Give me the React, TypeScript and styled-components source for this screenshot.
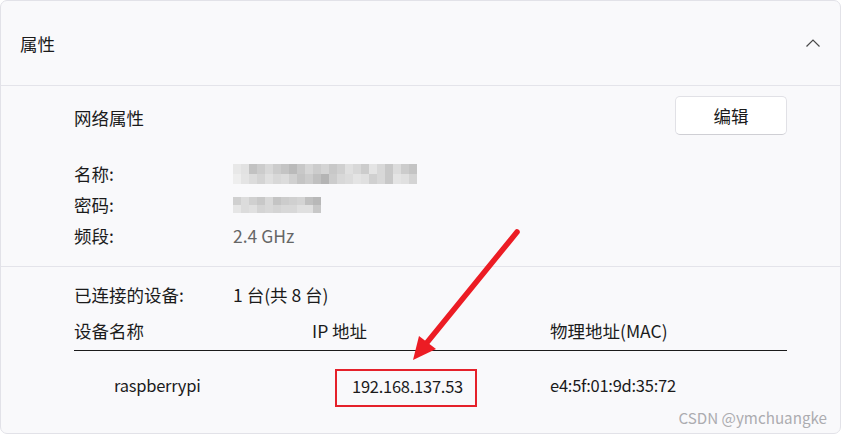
import React from "react";
import styled, { createGlobalStyle } from "styled-components";

const GlobalStyle = createGlobalStyle`
  html, body {
    margin: 0;
    padding: 0;
    background: #ffffff;
  }
  body {
    font-family: "Noto Sans CJK SC", "Noto Sans", sans-serif;
    color: #1b1b1b;
  }
`;

const Card = styled.div`
  position: relative;
  box-sizing: border-box;
  width: 841px;
  height: 434px;
  border: 1px solid #e2e2e8;
  border-radius: 7px;
  background: #f9f9fb;
  overflow: hidden;
  font-size: 17.5px;
`;

const Header = styled.div`
  box-sizing: border-box;
  height: 85px;
  padding: 0 20px 0 19px;
  display: flex;
  align-items: center;
  justify-content: space-between;
  border-bottom: 1px solid #e4e4ea;
`;

const Title = styled.span`
  line-height: 1;
  margin-top: 2px;
`;

const Section = styled.div<{ $top: number; $bottom: number }>`
  padding: ${(p) => p.$top}px 53px ${(p) => p.$bottom}px 73px;
  & + & {
    border-top: 1px solid #e4e4ea;
  }
`;

const TopRow = styled.div`
  display: flex;
  align-items: center;
  justify-content: space-between;
  margin-bottom: 23px;
`;

const Subtitle = styled.span`
  margin-top: 4px;
`;

const EditButton = styled.button`
  box-sizing: border-box;
  width: 112px;
  height: 39px;
  border: 1px solid #e1e1e6;
  border-bottom-color: #cfcfd4;
  border-radius: 5px;
  background: #ffffff;
  font-family: inherit;
  font-size: 17.5px;
  color: #1b1b1b;
`;

const InfoGrid = styled.div`
  display: grid;
  grid-template-columns: 159px 1fr;
  grid-auto-rows: 31px;
  align-items: center;
`;

const Value = styled.span<{ $muted?: boolean }>`
  color: ${(p) => (p.$muted ? "#666666" : "#1b1b1b")};
  display: flex;
  align-items: center;
`;

const Table = styled.div`
  margin-top: 5px;
`;

const TableRow = styled.div<{ $head?: boolean }>`
  display: grid;
  grid-template-columns: 238px 238px 1fr;
  ${(p) =>
    p.$head
      ? `
    height: 35px;
    line-height: 31px;
    border-bottom: 1px solid #1b1b1b;
  `
      : `
    margin-top: 18px;
    line-height: 30px;
    font-size: 16.5px;
    letter-spacing: -0.25px;
  `}
`;

const Cell = styled.div<{ $indent?: number }>`
  padding-left: ${(p) => p.$indent ?? 0}px;
`;

const BodyCell = styled(Cell)`
  padding-top: 1px;
`;

const Highlight = styled.span`
  display: inline-block;
  box-sizing: border-box;
  height: 38px;
  width: 142px;
  margin-left: 23px;
  padding: 0 0 0 15px;
  border: 2px solid #e5212a;
`;

const Overlay = styled.svg`
  position: absolute;
  left: 0;
  top: 0;
  pointer-events: none;
`;

const Watermark = styled.span`
  position: absolute;
  right: 13px;
  bottom: 5px;
  font-size: 15.2px;
  color: #acacb0;
`;

const nameShades = [
  [0xe8, 0xe2, 0xc2, 0xcc, 0xd8, 0xcc, 0xc4, 0xba, 0xc8, 0xd6, 0xcc, 0xd4, 0xc8, 0xd0, 0xe0, 0xd8, 0xcc, 0xe4, 0xd8, 0xc8, 0xdc, 0xcc, 0xc4],
  [0xee, 0xe4, 0xdc, 0xd4, 0xe0, 0xd8, 0xdc, 0xd0, 0xc4, 0xcc, 0xc0, 0xb4, 0xcc, 0xd8, 0xdc, 0xe4, 0xe0, 0xd0, 0xd8, 0xc8, 0xe4, 0xe0, 0xd4],
];

const passShades = [
  [0xd0, 0xdc, 0xd0, 0xc8, 0xd8, 0xc4, 0xcc, 0xd0, 0xd4, 0xc0, 0xb8],
  [0xe6, 0xdc, 0xe0, 0xd4, 0xd8, 0xd4, 0xd8, 0xd8, 0xe0, 0xe0, 0xc8],
];

const Mosaic = ({
  shades,
  cell,
  rowH,
}: {
  shades: number[][];
  cell: number;
  rowH: number;
}) => {
  const cols = shades[0].length;
  return (
    <svg width={cols * cell} height={shades.length * rowH}>
      <defs>
        <filter id={`soft${cols}`}>
          <feGaussianBlur stdDeviation="0.7" />
        </filter>
      </defs>
      <g filter={`url(#soft${cols})`}>
        {shades.map((row, r) =>
          row.map((s, c) => (
            <rect
              key={`${r}-${c}`}
              x={c * cell}
              y={r * rowH}
              width={cell}
              height={rowH}
              fill={`rgb(${s},${s},${s})`}
            />
          ))
        )}
      </g>
    </svg>
  );
};

const ChevronUp = () => (
  <svg width="14" height="8" viewBox="0 0 14 8">
    <polyline
      points="0.5,7.5 7,1 13.5,7.5"
      fill="none"
      stroke="#4a4a4a"
      strokeWidth="1.2"
    />
  </svg>
);

const devices = [
  { name: "raspberrypi", ip: "192.168.137.53", mac: "e4:5f:01:9d:35:72" },
];

export default function App() {
  return (
    <>
      <GlobalStyle />
      <Card>
        <Header>
          <Title>属性</Title>
          <ChevronUp />
        </Header>
        <Section $top={10} $bottom={15}>
          <TopRow>
            <Subtitle>网络属性</Subtitle>
            <EditButton>编辑</EditButton>
          </TopRow>
          <InfoGrid>
            <span>名称:</span>
            <Value>
              <Mosaic shades={nameShades} cell={8} rowH={10} />
            </Value>
            <span>密码:</span>
            <Value>
              <Mosaic shades={passShades} cell={8} rowH={8} />
            </Value>
            <span>频段:</span>
            <Value $muted>2.4 GHz</Value>
          </InfoGrid>
        </Section>
        <Section $top={12} $bottom={0}>
          <InfoGrid>
            <span>已连接的设备:</span>
            <Value>1 台(共 8 台)</Value>
          </InfoGrid>
          <Table>
            <TableRow $head>
              <Cell>设备名称</Cell>
              <Cell>IP 地址</Cell>
              <Cell>物理地址(MAC)</Cell>
            </TableRow>
            {devices.map((d) => (
              <TableRow key={d.mac}>
                <BodyCell $indent={40}>{d.name}</BodyCell>
                <Cell>
                  <Highlight>{d.ip}</Highlight>
                </Cell>
                <BodyCell>{d.mac}</BodyCell>
              </TableRow>
            ))}
          </Table>
        </Section>
        <Overlay width="841" height="434">
          <line
            x1="516"
            y1="231"
            x2="424"
            y2="344"
            stroke="#ec1c24"
            strokeWidth="5.5"
            strokeLinecap="round"
          />
          <polygon points="412,359 418,335 435,348" fill="#ec1c24" />
        </Overlay>
        <Watermark>CSDN @ymchuangke</Watermark>
      </Card>
    </>
  );
}
